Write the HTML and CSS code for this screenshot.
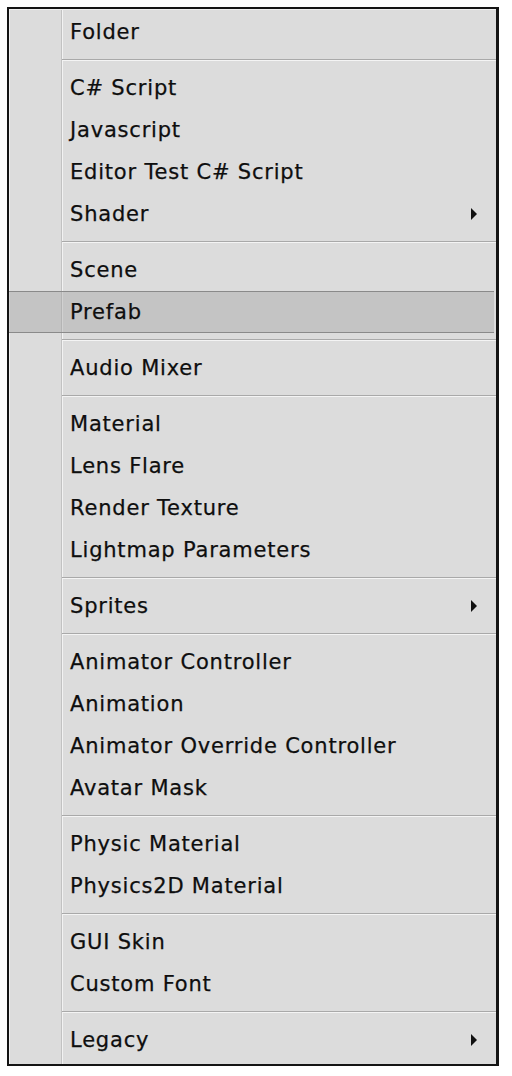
FILE: index.html
```html
<!DOCTYPE html>
<html>
<head>
<meta charset="utf-8">
<link rel="stylesheet" href="styles.css">
</head>
<body>
<div class="menu">
  <div class="item">Folder</div>
  <div class="sep"></div>
  <div class="item">C# Script</div>
  <div class="item">Javascript</div>
  <div class="item">Editor Test C# Script</div>
  <div class="item sub">Shader<span class="arrow"></span></div>
  <div class="sep"></div>
  <div class="item">Scene</div>
  <div class="item hl">Prefab</div>
  <div class="sep"></div>
  <div class="item">Audio Mixer</div>
  <div class="sep"></div>
  <div class="item">Material</div>
  <div class="item">Lens Flare</div>
  <div class="item">Render Texture</div>
  <div class="item">Lightmap Parameters</div>
  <div class="sep"></div>
  <div class="item sub">Sprites<span class="arrow"></span></div>
  <div class="sep"></div>
  <div class="item">Animator Controller</div>
  <div class="item">Animation</div>
  <div class="item">Animator Override Controller</div>
  <div class="item">Avatar Mask</div>
  <div class="sep"></div>
  <div class="item">Physic Material</div>
  <div class="item">Physics2D Material</div>
  <div class="sep"></div>
  <div class="item">GUI Skin</div>
  <div class="item">Custom Font</div>
  <div class="sep"></div>
  <div class="item sub">Legacy<span class="arrow"></span></div>
</div>
</body>
</html>
```

FILE: styles.css
```css
html, body {
  margin: 0;
  padding: 0;
  background: #ffffff;
}

body {
  padding: 7px 0 0 7px;
}

.menu {
  width: 487px;
  border: 2px solid #141414;
  border-right-width: 3px;
  background:
    linear-gradient(to right,
      transparent 52px,
      #c2c2c2 52px, #c2c2c2 53px,
      #f2f2f2 53px, #f2f2f2 54px,
      transparent 54px),
    #dcdcdc;
  padding: 2px 0 3px 0;
  font-family: "DejaVu Sans", "Noto Sans", sans-serif;
  font-size: 21px;
  letter-spacing: 0.8px;
  color: #0e0e0e;
  -webkit-text-stroke: 0.25px #0e0e0e;
  box-shadow: inset 1px 1px 0 #f0f0f0;
}

.item {
  height: 42px;
  display: flex;
  align-items: center;
  justify-content: space-between;
  padding: 0 19px 0 61px;
  box-sizing: border-box;
  position: relative;
}

.item.hl {
  background: rgba(160, 160, 160, 0.4);
  border-top: 1px solid #8a8a8a;
  border-bottom: 1px solid #8a8a8a;
  margin-right: 2px;
}

.arrow {
  width: 0;
  height: 0;
  border-top: 6px solid transparent;
  border-bottom: 6px solid transparent;
  border-left: 6px solid #111111;
}

.sep {
  height: 14px;
  display: flex;
  align-items: center;
  margin-left: 53px;
}

.sep::before {
  content: "";
  flex: 1;
  border-top: 1px solid #a9a9a9;
  border-bottom: 1px solid #f4f4f4;
  height: 0;
}
```
